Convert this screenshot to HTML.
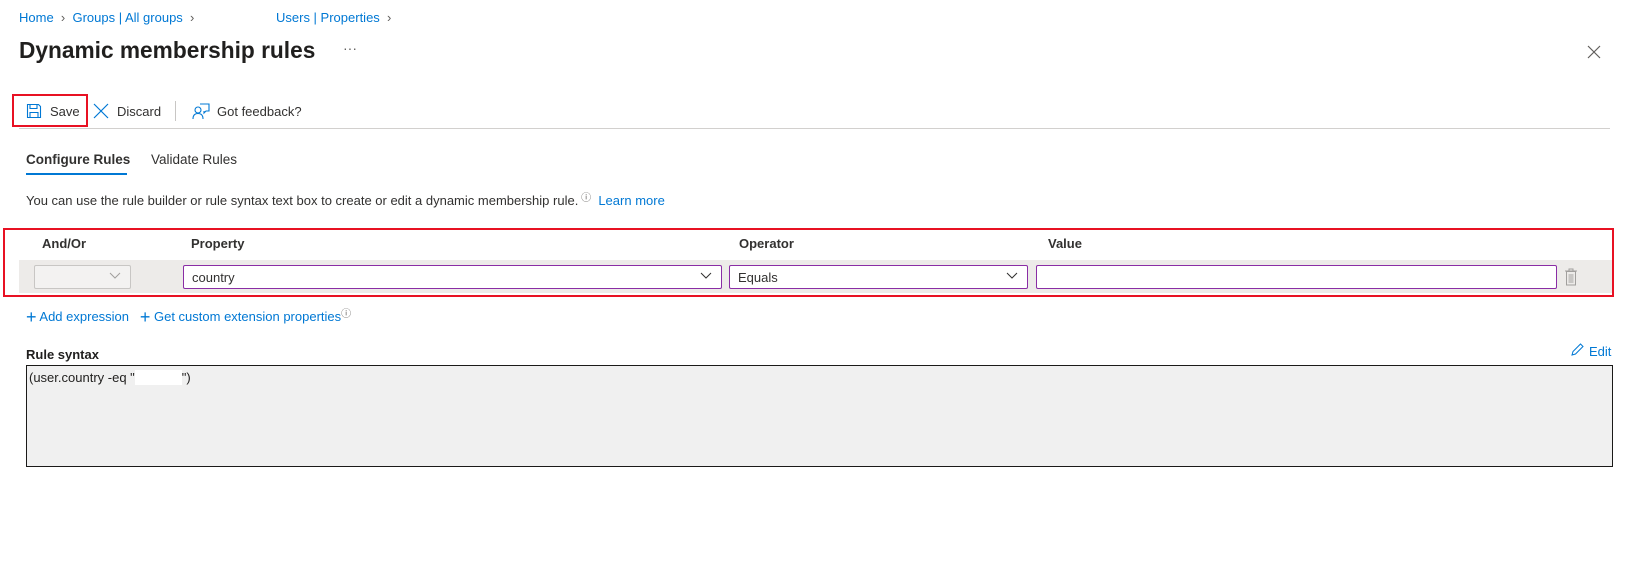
<!DOCTYPE html>
<html><head><meta charset="utf-8"><style>
*{box-sizing:border-box;margin:0;padding:0}
body{width:1630px;height:581px;background:#fff;font-family:"Liberation Sans",Arial,sans-serif;color:#323130;position:relative;overflow:hidden;font-size:13px}
.a{position:absolute;white-space:nowrap}
.link{color:#0078d4}
.sel{position:absolute;top:265px;height:24px;border:1px solid #8a2da5;border-radius:2px;background:#fff;font-size:13px;padding:4px 8px}
.chev{position:absolute;right:9px;top:6px}
.hdr{position:absolute;top:236px;font-weight:bold;font-size:13px;color:#323130}
</style></head><body>
<div class="a link" style="left:19px;top:10px;font-size:13px">Home <span style="color:#605e5c">&nbsp;›&nbsp;</span> Groups | All groups <span style="color:#605e5c">&nbsp;›</span></div>
<div class="a link" style="left:276px;top:10px;font-size:13px">Users | Properties <span style="color:#605e5c">&nbsp;›</span></div>
<div class="a" style="left:19px;top:37px;font-size:22.7px;font-weight:bold;color:#201f1e">Dynamic membership rules</div>
<div class="a" style="left:343px;top:40px;font-size:14px;color:#605e5c">···</div>
<svg class="a" style="left:1587px;top:45px" width="14" height="14" viewBox="0 0 14 14"><path d="M1 1L13 13M13 1L1 13" stroke="#605e5c" stroke-width="1.2"/></svg>

<div class="a" style="left:12px;top:94px;width:76px;height:33px;border:2px solid #e81123"></div>
<svg class="a" style="left:26px;top:103px" width="16" height="16" viewBox="0 0 16 16"><path d="M1.5 1.5h11l2 2v11h-13z M4 1.5v4h7v-4 M4 14.5v-5h8v5" fill="none" stroke="#0078d4" stroke-width="1.1"/></svg>
<div class="a" style="left:50px;top:104px;font-size:13px">Save</div>
<svg class="a" style="left:93px;top:103px" width="16" height="16" viewBox="0 0 16 16"><path d="M1 1L15 15M15 1L1 15" stroke="#0078d4" stroke-width="1.2"/></svg>
<div class="a" style="left:117px;top:104px;font-size:13px">Discard</div>
<div class="a" style="left:175px;top:101px;width:1px;height:20px;background:#c8c6c4"></div>
<svg class="a" style="left:192px;top:102px" width="18" height="18" viewBox="0 0 18 18"><circle cx="6" cy="8" r="3" fill="none" stroke="#0078d4" stroke-width="1.1"/><path d="M1 17c0-4 2-5.5 5-5.5s5 1.5 5 5.5M8 2h9v7h-3l-2 2v-2" fill="none" stroke="#0078d4" stroke-width="1.1"/></svg>
<div class="a" style="left:217px;top:104px;font-size:13px">Got feedback?</div>
<div class="a" style="left:19px;top:128px;width:1591px;height:1px;background:#d2d0ce"></div>

<div class="a" style="left:26px;top:152px;font-size:13.5px;font-weight:bold;color:#323130">Configure Rules</div>
<div class="a" style="left:26px;top:173px;width:101px;height:2px;background:#0078d4"></div>
<div class="a" style="left:151px;top:152px;font-size:13.5px">Validate Rules</div>

<div class="a" style="left:26px;top:189px;font-size:13px">You can use the rule builder or rule syntax text box to create or edit a dynamic membership rule.<span style="font-size:10px;vertical-align:4px;color:#605e5c"> ⓘ</span> &nbsp;<span class="link">Learn more</span></div>

<div class="a" style="left:3px;top:228px;width:1611px;height:69px;border:2px solid #e81123"></div>
<div class="hdr" style="left:42px">And/Or</div>
<div class="hdr" style="left:191px">Property</div>
<div class="hdr" style="left:739px">Operator</div>
<div class="hdr" style="left:1048px">Value</div>
<div class="a" style="left:19px;top:260px;width:1593px;height:33px;background:#edebe9"></div>
<div class="sel" style="left:34px;width:97px;border-color:#c8c6c4;background:#f3f2f1"><svg class="chev" width="12" height="8" viewBox="0 0 12 8"><path d="M1 1l5 5 5-5" fill="none" stroke="#a19f9d"/></svg></div>
<div class="sel" style="left:183px;width:539px">country<svg class="chev" width="12" height="8" viewBox="0 0 12 8"><path d="M1 1l5 5 5-5" fill="none" stroke="#323130"/></svg></div>
<div class="sel" style="left:729px;width:299px">Equals<svg class="chev" width="12" height="8" viewBox="0 0 12 8"><path d="M1 1l5 5 5-5" fill="none" stroke="#323130"/></svg></div>
<div class="sel" style="left:1036px;width:521px"></div>
<svg class="a" style="left:1564px;top:268px" width="14" height="18" viewBox="0 0 14 18"><path d="M1 3h12M5 3V1h4v2M2.5 3.5h9v13.5h-9z" fill="none" stroke="#a19f9d"/><rect x="4.5" y="6" width="5" height="9" fill="#c8c6c4"/></svg>

<div class="a link" style="left:26px;top:305px;font-size:13px"><span style="font-size:18px;vertical-align:-2px">+</span> Add expression &nbsp; <span style="font-size:18px;vertical-align:-2px">+</span> Get custom extension properties<span style="font-size:10px;vertical-align:4px;color:#605e5c">ⓘ</span></div>

<div class="a" style="left:26px;top:347px;font-size:13px;font-weight:bold;color:#201f1e">Rule syntax</div>
<svg class="a" style="left:1571px;top:343px" width="13" height="13" viewBox="0 0 13 13"><path d="M1 12l1-3.5 7.5-7.5 2.5 2.5-7.5 7.5z" fill="none" stroke="#0078d4"/></svg>
<div class="a link" style="left:1589px;top:344px;font-size:13px">Edit</div>
<div class="a" style="left:26px;top:365px;width:1587px;height:102px;background:#f0f0f0;border:1px solid #1b1a19;padding:4px 2px;font-size:13px;color:#201f1e">(user.country -eq "<span style="display:inline-block;width:47px;height:15px;background:#fff;vertical-align:-3px"></span>")</div>
</body></html>
